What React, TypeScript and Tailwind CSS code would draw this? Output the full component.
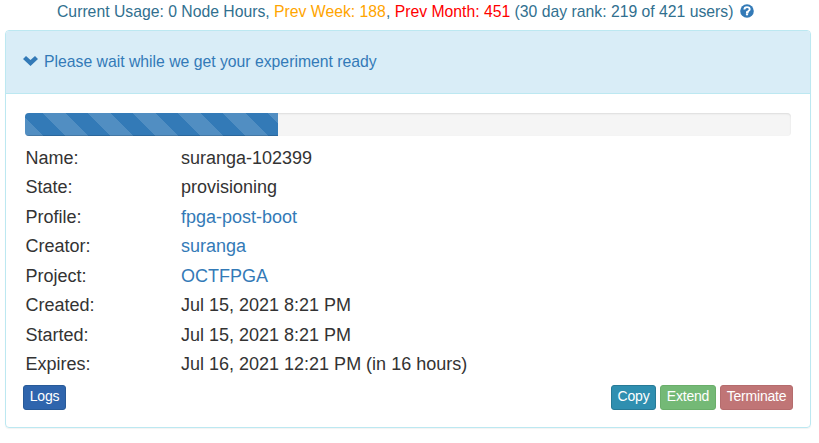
import React from "react";

type Row = { label: string; value: string; link?: boolean };

const rows: Row[] = [
  { label: "Name:", value: "suranga-102399" },
  { label: "State:", value: "provisioning" },
  { label: "Profile:", value: "fpga-post-boot", link: true },
  { label: "Creator:", value: "suranga", link: true },
  { label: "Project:", value: "OCTFPGA", link: true },
  { label: "Created:", value: "Jul 15, 2021 8:21 PM" },
  { label: "Started:", value: "Jul 15, 2021 8:21 PM" },
  { label: "Expires:", value: "Jul 16, 2021 12:21 PM (in 16 hours)" },
];

const button = "h-[25px] rounded-[3px] border text-center text-[14px] leading-[20px] pb-[3px] tracking-[-0.2px] text-white";

export default function App() {
  return (
    <div className="h-[443px] w-[819px] overflow-hidden bg-white font-['Liberation_Sans',Arial,sans-serif] text-[#333]">
      <div className="flex h-[30px] items-start pl-[57px] text-[15.75px] leading-[24px] text-[#31708f]">
        <span className="whitespace-pre">
          Current Usage: 0 Node Hours, <span className="text-[#ffa500]">Prev Week: 188</span>,{" "}
          <span className="text-[#ff0000]">Prev Month: 451</span> (30 day rank: 219 of 421 users)
        </span>
        <svg className="ml-[6px] mt-[4px] h-[14px] w-[14px]" viewBox="0 0 14 14" aria-label="Help">
          <circle cx="7" cy="7" r="6.8" fill="#337ab7" />
          <path d="M4.4 5.6C4.4 3.8 5.4 3.1 7 3.1C8.7 3.1 9.7 3.9 9.7 5.2C9.7 6.9 7.7 6.7 7.7 8.3H6" fill="none" stroke="#fff" strokeWidth="1.9" />
          <path d="M5.9 9.3H8.1V11.3H5.9Z" fill="#fff" />
        </svg>
      </div>
      <section className="ml-[5px] h-[398px] w-[806px] rounded-[4px] border border-[#bce8f1] shadow-[0_1px_1px_rgba(0,0,0,0.05)]">
        <header className="flex h-[63px] items-center rounded-t-[3px] border-b border-[#bce8f1] bg-[#d9edf7] pl-[17px] text-[#337ab7]">
          <svg className="mb-[2px] h-[10px] w-[15px]" viewBox="0 0 15 10">
            <path d="M0 3L3 0L7.5 3.9L12 0L15 3L7.5 10Z" fill="#337ab7" />
          </svg>
          <h3 className="ml-[6px] whitespace-nowrap text-[15.75px] leading-[20px]">Please wait while we get your experiment ready</h3>
        </header>
        <div className="ml-[19px] mt-[19px] h-[23px] w-[766px] overflow-hidden rounded-[4px] bg-[#f5f5f5] shadow-[inset_0_1px_2px_rgba(0,0,0,0.1)]">
          <div className="h-full w-[253px] bg-[#337ab7] bg-[linear-gradient(45deg,rgba(255,255,255,.15)_25%,transparent_25%,transparent_50%,rgba(255,255,255,.15)_50%,rgba(255,255,255,.15)_75%,transparent_75%,transparent)] bg-[length:45px_45px] bg-[position:18px_0] shadow-[inset_0_-1px_0_rgba(0,0,0,0.15)]" />
        </div>
        <dl className="mt-[7px] pl-[19px] text-[18px]">
          {rows.map((row) => (
            <div key={row.label} className="flex h-[29.5px] items-center whitespace-nowrap leading-[20px]">
              <dt className="w-[156px] pl-[0.4px]">{row.label}</dt>
              <dd className={row.link ? "text-[#337ab7]" : ""}>{row.value}</dd>
            </div>
          ))}
        </dl>
        <div className="mt-[6px] flex gap-[4px] pl-[17px] pr-[17px]">
          <button className={`${button} mr-auto w-[43px] border-[#285a98] bg-[#2f65ad]`}>Logs</button>
          <button className={`${button} w-[45px] border-[#277a96] bg-[#2f8fb0]`}>Copy</button>
          <button className={`${button} w-[56px] border-[#6aae6a] bg-[#74b976]`}>Extend</button>
          <button className={`${button} w-[73px] border-[#b56c6d] bg-[#c07576]`}>Terminate</button>
        </div>
      </section>
    </div>
  );
}
